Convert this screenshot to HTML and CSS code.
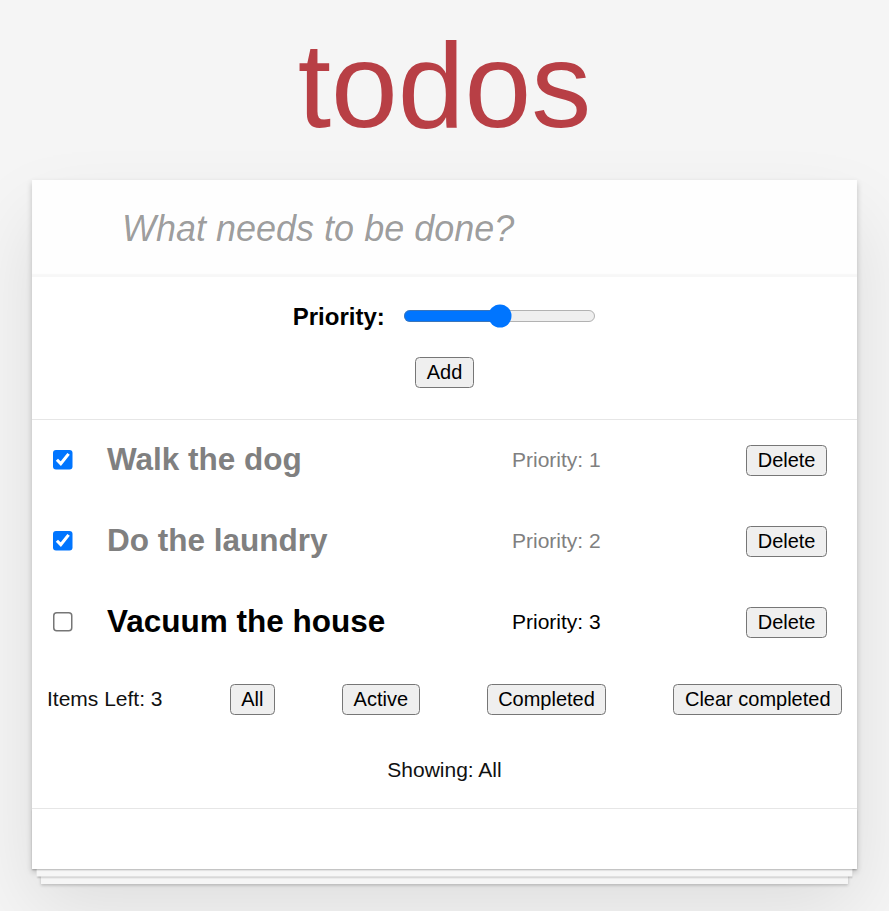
FILE: index.html
```html
<!DOCTYPE html>
<html lang="en">
<head>
<meta charset="utf-8">
<title>todos</title>
<link rel="stylesheet" href="styles.css">
</head>
<body>
<div class="page">
  <h1 class="app-title">todos</h1>
  <section class="todoapp">
    <header class="header">
      <input class="new-todo" placeholder="What needs to be done?">
    </header>
    <div class="adder">
      <div class="priority-row">
        <label class="priority-label" for="prio">Priority:</label>
        <input id="prio" class="priority-range" type="range" min="0" max="10" value="5">
      </div>
      <button class="btn add-btn">Add</button>
    </div>
    <ul class="todo-list">
      <li class="todo completed">
        <input class="toggle" type="checkbox" checked>
        <span class="todo-title">Walk the dog</span>
        <span class="todo-priority">Priority: 1</span>
        <button class="btn">Delete</button>
      </li>
      <li class="todo completed">
        <input class="toggle" type="checkbox" checked>
        <span class="todo-title">Do the laundry</span>
        <span class="todo-priority">Priority: 2</span>
        <button class="btn">Delete</button>
      </li>
      <li class="todo">
        <input class="toggle" type="checkbox">
        <span class="todo-title">Vacuum the house</span>
        <span class="todo-priority">Priority: 3</span>
        <button class="btn">Delete</button>
      </li>
    </ul>
    <div class="filters">
      <span class="items-left">Items Left: 3</span>
      <button class="btn">All</button>
      <button class="btn">Active</button>
      <button class="btn">Completed</button>
      <button class="btn">Clear completed</button>
    </div>
    <p class="showing">Showing: All</p>
    <footer class="footer"></footer>
  </section>
</div>
</body>
</html>
```
FILE: styles.css
```css
html, body {
  margin: 0;
  padding: 0;
}

body {
  background: #f5f5f5;
  font-family: "Liberation Sans", Arial, sans-serif;
  font-size: 14px;
  line-height: 1.4em;
  color: #111;
}

.page {
  zoom: 1.5;
}

.app-title {
  margin: 16.7px 0 23.3px;
  font-size: 80px;
  line-height: 80px;
  font-weight: 200;
  text-align: center;
  color: #b83f45;
}

.todoapp {
  max-width: 550px;
  margin: 0 auto 40px;
  background: #fff;
  box-shadow: 0 2px 4px 0 rgba(0, 0, 0, 0.2), 0 25px 50px 0 rgba(0, 0, 0, 0.1);
}

.new-todo {
  display: block;
  width: 100%;
  box-sizing: border-box;
  height: 65px;
  margin: 0;
  padding: 16px 16px 16px 60px;
  border: none;
  outline: none;
  font-family: inherit;
  font-size: 24px;
  line-height: 1.4em;
  color: inherit;
  background: rgba(0, 0, 0, 0.003);
  box-shadow: inset 0 -2px 1px rgba(0, 0, 0, 0.03);
}

.new-todo::placeholder {
  font-style: italic;
  font-weight: 400;
  color: rgba(0, 0, 0, 0.4);
}

.btn {
  font-family: "Liberation Sans", Arial, sans-serif;
  font-size: 13.333px;
  line-height: normal;
  color: #000;
  background: #efefef;
  border: 1px solid #767676;
  border-radius: 3px;
  padding: 2px 7px;
  margin: 0;
}

.adder {
  display: flex;
  flex-direction: column;
  align-items: center;
  padding: 16px 0 20.7px;
}

.priority-row {
  display: flex;
  align-items: center;
  gap: 12px;
  height: 20px;
}

.priority-label {
  font-weight: bold;
  font-size: 16px;
  color: #000;
}

.priority-range {
  width: 129px;
  margin: 0;
}

.adder .add-btn {
  margin-top: 16.7px;
}

.todo-list {
  list-style: none;
  margin: 0;
  padding: 0;
  border-top: 1px solid #e6e6e6;
}

.todo {
  display: grid;
  grid-template-columns: 36px 270px 1fr auto;
  align-items: center;
  height: 54px;
  padding: 0 20px 0 14px;
}

.toggle {
  margin: 0;
  width: 13px;
  height: 13px;
}

.todo-title {
  font-size: 21px;
  font-weight: bold;
  color: #000;
}

.todo-priority {
  font-size: 14px;
  color: #000;
}

.todo.completed .todo-title,
.todo.completed .todo-priority {
  color: #808080;
}

.filters {
  display: flex;
  justify-content: space-between;
  align-items: center;
  padding: 14px 10px;
}

.items-left {
  font-size: 14px;
}

.showing {
  margin: 0;
  padding: 13px 0 15.8px;
  text-align: center;
  line-height: 19.6px;
}

.footer {
  height: 40px;
  border-top: 1px solid #e6e6e6;
  background: #fff;
  box-shadow: 0 1px 1px rgba(0, 0, 0, 0.2),
    0 8px 0 -3px #f6f6f6,
    0 9px 1px -3px rgba(0, 0, 0, 0.2),
    0 16px 0 -6px #f6f6f6,
    0 17px 2px -6px rgba(0, 0, 0, 0.2);
}
```
